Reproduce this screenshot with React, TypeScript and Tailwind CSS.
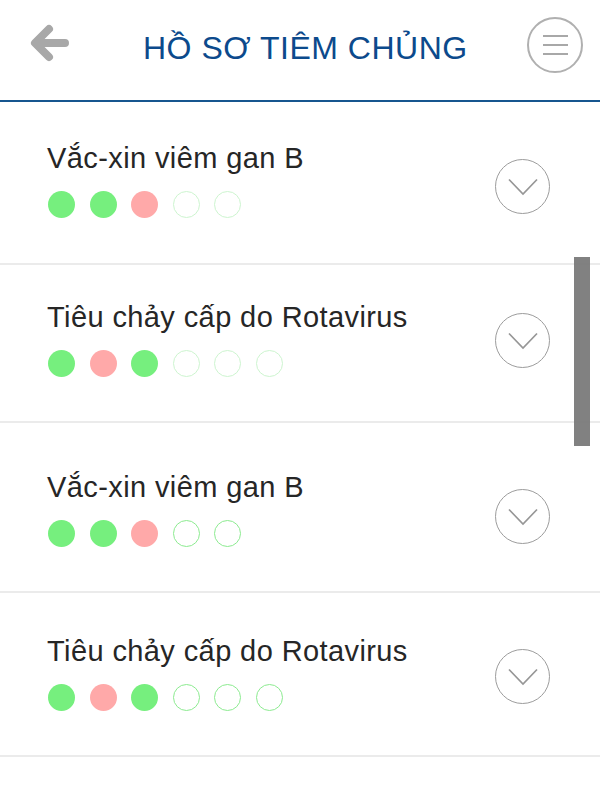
import React from "react";

type Dot = "done" | "missed" | "todo";

type Vaccine = {
  name: string;
  doses: Dot[];
  pad: string;
  chevronShift: string;
  todoBorder: string;
};

const vaccines: Vaccine[] = [
  {
    name: "Vắc-xin viêm gan B",
    doses: ["done", "done", "missed", "todo", "todo"],
    pad: "pt-[40px] pb-[45px]",
    chevronShift: "translate-y-[6px]",
    todoBorder: "border-[#cdf5cf]",
  },
  {
    name: "Tiêu chảy cấp do Rotavirus",
    doses: ["done", "missed", "done", "todo", "todo", "todo"],
    pad: "pt-[36px] pb-[44px]",
    chevronShift: "translate-y-[1px]",
    todoBorder: "border-[#cdf5cf]",
  },
  {
    name: "Vắc-xin viêm gan B",
    doses: ["done", "done", "missed", "todo", "todo"],
    pad: "pt-[48px] pb-[44px]",
    chevronShift: "translate-y-[7px]",
    todoBorder: "border-[#8ceb90]",
  },
  {
    name: "Tiêu chảy cấp do Rotavirus",
    doses: ["done", "missed", "done", "todo", "todo", "todo"],
    pad: "pt-[42px] pb-[44px]",
    chevronShift: "translate-y-[3px]",
    todoBorder: "border-[#8ceb90]",
  },
];

function DoseDot({ state, todoBorder }: { state: Dot; todoBorder: string }) {
  if (state === "done") {
    return <span className="block h-[27px] w-[27px] rounded-full bg-[#76ef7e]" />;
  }
  if (state === "missed") {
    return <span className="block h-[27px] w-[27px] rounded-full bg-[#ffa9a9]" />;
  }
  return (
    <span
      className={"block h-[27px] w-[27px] rounded-full border bg-white " + todoBorder}
    />
  );
}

function VaccineRow({ item }: { item: Vaccine }) {
  return (
    <div
      className={
        "flex items-center border-b-2 border-[#ebebeb] pl-[47px] pr-[50px] " + item.pad
      }
    >
      <div className="flex-1">
        <p className="text-[29px] leading-[32px] tracking-[0.4px] text-[#262626]">
          {item.name}
        </p>
        <div className="mt-[17px] flex gap-[14.5px] pl-[1px]">
          {item.doses.map((d, i) => (
            <DoseDot key={i} state={d} todoBorder={item.todoBorder} />
          ))}
        </div>
      </div>
      {/* nút mở rộng */}
      <button
        className={
          "flex h-[55px] w-[55px] items-center justify-center rounded-full border-[1.5px] border-[#9c9c9c] " +
          item.chevronShift
        }
      >
        <svg width="32" height="18" viewBox="0 0 32 18" fill="none" className="mt-[1px]">
          <path d="M2 1.5L16 16L30 1.5" stroke="#969696" strokeWidth="1.7" />
        </svg>
      </button>
    </div>
  );
}

export default function App() {
  return (
    <div
      className="relative h-[800px] w-[600px] overflow-hidden bg-white"
      style={{ fontFamily: '"Liberation Sans", Arial, sans-serif' }}
    >
      <header className="flex h-[102px] items-start border-b-2 border-[#17568f] pl-[30px] pr-[17px]">
        <svg width="40" height="40" viewBox="0 0 40 40" fill="none" className="mt-[23px]">
          <path
            d="M35 20H7M19 6L5 20L19 34"
            stroke="#a8a8a8"
            strokeWidth="8"
            strokeLinecap="round"
            strokeLinejoin="round"
          />
        </svg>
        <h1 className="ml-[73px] mt-[30px] flex-1 text-[32px] leading-[36px] tracking-[0.5px] text-[#0c4a8c]">
          HỒ SƠ TIÊM CHỦNG
        </h1>
        <button className="mt-[17px] flex h-[56px] w-[56px] flex-col items-center justify-center gap-[7px] rounded-full border-2 border-[#b0b0b0]">
          <span className="block h-[2px] w-[25px] bg-[#a8a8a8]" />
          <span className="block h-[2px] w-[25px] bg-[#a8a8a8]" />
          <span className="block h-[2px] w-[25px] bg-[#a8a8a8]" />
        </button>
      </header>

      <div>
        {vaccines.map((v, i) => (
          <VaccineRow key={i} item={v} />
        ))}
      </div>

      {/* thanh cuộn */}
      <div className="absolute left-[574px] top-[257px] h-[189px] w-[16px] bg-[#7a7a7a]/95" />
    </div>
  );
}
